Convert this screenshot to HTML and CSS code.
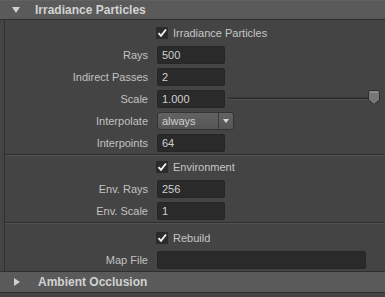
FILE: index.html
```html
<!DOCTYPE html>
<html>
<head>
<meta charset="utf-8">
<link rel="stylesheet" href="styles.css">
</head>
<body>
<div class="panel">
  <div class="hdr">
    <span class="tri tri-down"></span>
    <span class="hdr-title">Irradiance Particles</span>
  </div>
  <div class="frame">
    <div class="group">
      <div class="row">
        <span></span>
        <label class="check"><span class="box"><svg width="12" height="12" viewBox="0 0 12 12"><path d="M2.5 6.2 L5 8.8 L10 2.5" fill="none" stroke="#f2f2f2" stroke-width="1.9"/></svg></span>Irradiance Particles</label>
      </div>
      <div class="row"><span class="lbl">Rays</span><span class="field">500</span></div>
      <div class="row"><span class="lbl">Indirect Passes</span><span class="field">2</span></div>
      <div class="row"><span class="lbl">Scale</span>
        <div class="with-slider"><span class="field">1.000</span>
          <div class="slider"><span class="track"></span>
            <svg class="handle" width="12" height="15" viewBox="0 0 12 15"><path d="M0.5 2 Q0.5 0.5 2 0.5 H10 Q11.5 0.5 11.5 2 V10 L6 14.5 L0.5 10 Z" fill="#767676" stroke="#2e2e2e"/><path d="M2 2 H10" stroke="#9a9a9a"/></svg>
          </div>
        </div>
      </div>
      <div class="row"><span class="lbl">Interpolate</span>
        <div class="dropdown"><span class="dd-text">always</span><span class="dd-btn"><span class="dd-arrow"></span></span></div>
      </div>
      <div class="row"><span class="lbl">Interpoints</span><span class="field">64</span></div>
    </div>
    <div class="group g2">
      <div class="row">
        <span></span>
        <label class="check"><span class="box"><svg width="12" height="12" viewBox="0 0 12 12"><path d="M2.5 6.2 L5 8.8 L10 2.5" fill="none" stroke="#f2f2f2" stroke-width="1.9"/></svg></span>Environment</label>
      </div>
      <div class="row"><span class="lbl">Env. Rays</span><span class="field">256</span></div>
      <div class="row"><span class="lbl">Env. Scale</span><span class="field">1</span></div>
    </div>
    <div class="group g3">
      <div class="row">
        <span></span>
        <label class="check"><span class="box"><svg width="12" height="12" viewBox="0 0 12 12"><path d="M2.5 6.2 L5 8.8 L10 2.5" fill="none" stroke="#f2f2f2" stroke-width="1.9"/></svg></span>Rebuild</label>
      </div>
      <div class="row"><span class="lbl">Map File</span><span class="field wide"></span></div>
    </div>
  </div>
  <div class="hdr closed">
    <span class="tri tri-right"></span>
    <span class="hdr-title">Ambient Occlusion</span>
  </div>
</div>
</body>
</html>
```

FILE: styles.css
```css
html, body {
  margin: 0;
  padding: 0;
  background: #444444;
}
body {
  width: 385px;
  height: 297px;
  overflow: hidden;
  font-family: "Liberation Sans", Arial, sans-serif;
  font-size: 11px;
  color: #c4c4c4;
}
.panel {
  display: flex;
  flex-direction: column;
}
.hdr {
  background: #5a5a5a;
  border-top: 1px solid #616161;
  border-bottom: 1px solid #2f2f2f;
  box-sizing: border-box;
  height: 20px;
  display: flex;
  align-items: center;
}
.hdr.closed {
  border-top: 1px solid #2f2f2f;
  height: 22px;
}
.hdr-title {
  font-weight: bold;
  font-size: 12px;
  color: #d2d2d2;
  margin-left: 15px;
}
.tri {
  display: inline-block;
  width: 0;
  height: 0;
}
.tri-down {
  margin-left: 12px;
  border-left: 4.5px solid transparent;
  border-right: 4.5px solid transparent;
  border-top: 6px solid #d0d0d0;
}
.tri-right {
  margin-left: 14px;
  margin-right: 3px;
  border-top: 4.5px solid transparent;
  border-bottom: 4.5px solid transparent;
  border-left: 6px solid #d0d0d0;
}
.frame {
  margin-left: 4px;
  border-left: 1px solid #303030;
  display: flex;
  flex-direction: column;
}
.group {
  display: flex;
  flex-direction: column;
  gap: 4px;
  padding: 4px 0 2px 0;
  border-bottom: 1px solid #2f2f2f;
  box-shadow: 0 1px 0 #525252;
}
.group.g2 {
  padding-top: 3px;
}
.group.g3 {
  padding-top: 5px;
  padding-bottom: 2px;
  margin-top: 1px;
  border-bottom: none;
  box-shadow: none;
}
.row {
  display: grid;
  grid-template-columns: 143px auto;
  column-gap: 9px;
  height: 18px;
  align-items: center;
}
.lbl {
  text-align: right;
  white-space: nowrap;
  color: #c2c2c2;
}
.field {
  display: flex;
  align-items: center;
  width: 68px;
  height: 18px;
  box-sizing: border-box;
  background: #2a2a2a;
  border: 1px solid #262626;
  border-radius: 2px;
  padding-left: 4px;
  color: #d0d0d0;
}
.field.wide {
  width: 209px;
}
.check {
  display: flex;
  align-items: center;
  gap: 5px;
  color: #c6c6c6;
  margin-left: -1px;
}
.box {
  width: 12px;
  height: 12px;
  background: #2b2b2b;
  display: inline-block;
}
.box svg {
  display: block;
}
.with-slider {
  display: flex;
  align-items: center;
}
.slider {
  position: relative;
  flex: 1;
  height: 18px;
  margin-left: 3px;
  margin-right: 6px;
  display: flex;
  align-items: center;
}
.track {
  display: block;
  width: 100%;
  height: 3px;
  background: #2c2c2c;
  border-top: 1px solid #383838;
  border-bottom: 1px solid #4f4f4f;
  box-sizing: border-box;
  margin-top: -1px;
}
.handle {
  position: absolute;
  right: -1px;
  top: 0px;
}
.dropdown {
  display: flex;
  width: 77px;
  height: 18px;
  box-sizing: border-box;
  border: 1px solid #333333;
  border-radius: 3px;
  background: linear-gradient(#626262, #565656);
}
.dd-text {
  flex: 1;
  display: flex;
  align-items: center;
  padding-left: 4px;
  color: #d0d0d0;
  border-right: 1px solid #3a3a3a;
}
.dd-btn {
  width: 14px;
  display: flex;
  align-items: center;
  justify-content: center;
}
.dd-arrow {
  width: 0;
  height: 0;
  border-left: 3.5px solid transparent;
  border-right: 3.5px solid transparent;
  border-top: 4px solid #dcdcdc;
}
```
